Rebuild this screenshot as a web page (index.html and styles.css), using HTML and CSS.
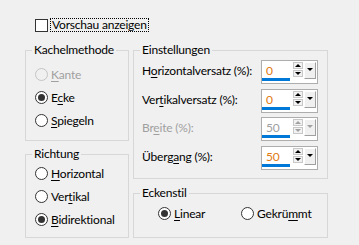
FILE: index.html
```html
<!DOCTYPE html>
<html>
<head>
    <meta charset="UTF-8" />
    <title>Kacheln</title>
    <link rel="stylesheet" href="styles.css">
</head>
<body>
    <div class="dialog">
        <label class="check-row">
            <span class="checkbox"></span>
            <span class="focus">Vorschau anzeigen</span>
        </label>

        <div class="columns">
            <div class="col-left">
                <fieldset class="group tiles">
                    <legend>Kachelmethode</legend>
                    <div class="radio disabled"><span class="dot"></span><span><u>K</u>ante</span></div>
                    <div class="radio checked"><span class="dot"></span><span>E<u>c</u>ke</span></div>
                    <div class="radio"><span class="dot"></span><span><u>S</u>piegeln</span></div>
                </fieldset>
                <fieldset class="group direction">
                    <legend>Richtung</legend>
                    <div class="radio"><span class="dot"></span><span><u>H</u>orizontal</span></div>
                    <div class="radio"><span class="dot"></span><span>Ver<u>t</u>ikal</span></div>
                    <div class="radio checked"><span class="dot"></span><span><u>B</u>idirektional</span></div>
                </fieldset>
            </div>

            <div class="col-right">
                <fieldset class="group settings">
                    <legend>Einstellungen</legend>
                    <div class="row">
                        <span>H<u>o</u>rizontalversatz (%):</span>
                        <div class="spin">
                            <div class="field"><div class="value">0</div><div class="bar"></div></div>
                            <div class="arrows"><span class="up"></span><span class="down"></span></div>
                            <div class="drop"></div>
                        </div>
                    </div>
                    <div class="row">
                        <span>Ver<u>t</u>ikalversatz (%):</span>
                        <div class="spin">
                            <div class="field"><div class="value">0</div><div class="bar"></div></div>
                            <div class="arrows"><span class="up"></span><span class="down"></span></div>
                            <div class="drop"></div>
                        </div>
                    </div>
                    <div class="row disabled">
                        <span>Br<u>e</u>ite (%):</span>
                        <div class="spin">
                            <div class="field"><div class="value">50</div><div class="bar"></div></div>
                            <div class="arrows"><span class="up"></span><span class="down"></span></div>
                            <div class="drop"></div>
                        </div>
                    </div>
                    <div class="row">
                        <span>Überg<u>a</u>ng (%):</span>
                        <div class="spin">
                            <div class="field"><div class="value">50</div><div class="bar"></div></div>
                            <div class="arrows"><span class="up"></span><span class="down"></span></div>
                            <div class="drop"></div>
                        </div>
                    </div>
                </fieldset>
                <fieldset class="group corners">
                    <legend>Eckenstil</legend>
                    <div class="radio-line">
                        <div class="radio checked"><span class="dot"></span><span><u>L</u>inear</span></div>
                        <div class="radio"><span class="dot"></span><span>Gekrü<u>m</u>mt</span></div>
                    </div>
                </fieldset>
            </div>
        </div>
    </div>
</body>
</html>
```

FILE: styles.css
```css
body {
    margin: 0;
    background: #f0f0f0;
    color: #000;
    font-family: 'Lato', 'Liberation Sans', sans-serif;
    font-size: 12px;
    letter-spacing: -0.2px;
    white-space: nowrap;
}
u { text-underline-offset: 2px; }
.dialog {
    padding: 18px 0 0 35px;
}
.check-row {
    display: flex;
    align-items: center;
    height: 14px;
}
.checkbox {
    width: 11px;
    height: 11px;
    border: 1px solid #333;
    background: #fff;
    margin-right: 2px;
}
.focus {
    border: 1px dotted #000;
    line-height: 12px;
    padding: 0 1px;
}
.columns {
    display: flex;
    gap: 4px;
    margin: 10px 0 0 -10px;
}
.col-left { width: 104px; }
.col-right { width: 195px; }
.group {
    margin: 0;
    min-width: 0;
    border: 1px solid #d7d7d7;
    padding: 0 8px;
}
.group legend {
    line-height: 16px;
    padding: 0 2px;
    margin-left: -2px;
}
.tiles {
    height: 99px;
    box-sizing: border-box;
    padding-top: 8px;
}
.direction {
    margin-top: 5px;
    height: 92px;
    box-sizing: border-box;
    padding-top: 3px;
}
.radio {
    display: flex;
    align-items: center;
    height: 16px;
    margin-bottom: 7px;
    padding-left: 1px;
}
.radio .dot {
    width: 11px;
    height: 11px;
    border: 1px solid #333;
    border-radius: 50%;
    background: #fff;
    margin-right: 3px;
    display: flex;
    align-items: center;
    justify-content: center;
}
.radio.checked .dot::after {
    content: '';
    width: 7px;
    height: 7px;
    border-radius: 50%;
    background: #333;
}
.radio.disabled { color: #a0a0a0; }
.radio.disabled .dot {
    border-color: #c4c4c4;
    background: #f0f0f0;
}

.settings {
    height: 137px;
    box-sizing: border-box;
    padding: 2px 9px 0 8px;
}
.row {
    display: flex;
    align-items: center;
    justify-content: space-between;
    height: 24px;
    margin-bottom: 4.7px;
}
.row > span { margin-top: -3px; }
.row.disabled { color: #a0a0a0; }
.spin {
    display: flex;
    width: 57px;
    height: 24px;
    box-sizing: border-box;
    border: 1px solid #adadad;
    background: #fff;
}
.field {
    width: 31px;
    padding-top: 2px;
}
.value {
    line-height: 15px;
    padding-left: 4px;
    color: #e07a12;
}
.row.disabled .value { color: #a0a0a0; }
.bar {
    width: 28px;
    height: 3px;
    background: #0078d7;
}
.arrows {
    width: 10px;
    margin-top: 1px;
    display: flex;
    flex-direction: column;
}
.arrows span {
    height: 7px;
    box-sizing: border-box;
    border: 1px solid #c8c8c8;
    background: #f2f2f2;
    display: flex;
    justify-content: center;
    align-items: center;
}
.arrows .down { margin-top: 1px; }
.arrows .up::after {
    content: '';
    border: 3px solid transparent;
    border-bottom: 3px solid #000;
    border-top: 0;
}
.arrows .down::after {
    content: '';
    border: 3px solid transparent;
    border-top: 3px solid #000;
    border-bottom: 0;
}
.drop {
    width: 12px;
    height: 17px;
    margin: 1px 0 0 1px;
    box-sizing: border-box;
    border: 1px solid #a0a0a0;
    border-top-color: #fff;
    border-left-color: #fff;
    background: #f0f0f0;
    display: flex;
    justify-content: center;
    padding-top: 5px;
}
.drop::after {
    content: '';
    height: 0;
    border: 3px solid transparent;
    border-top: 3px solid #000;
    border-bottom: 0;
}
.row.disabled .arrows .up::after { border-bottom-color: #a0a0a0; }
.row.disabled .arrows .down::after,
.row.disabled .drop::after { border-top-color: #a0a0a0; }

.corners {
    margin-top: 6px;
    height: 53px;
    box-sizing: border-box;
    padding-top: 4px;
}
.radio-line {
    display: grid;
    grid-template-columns: 83px auto;
    padding-left: 15px;
}
```
